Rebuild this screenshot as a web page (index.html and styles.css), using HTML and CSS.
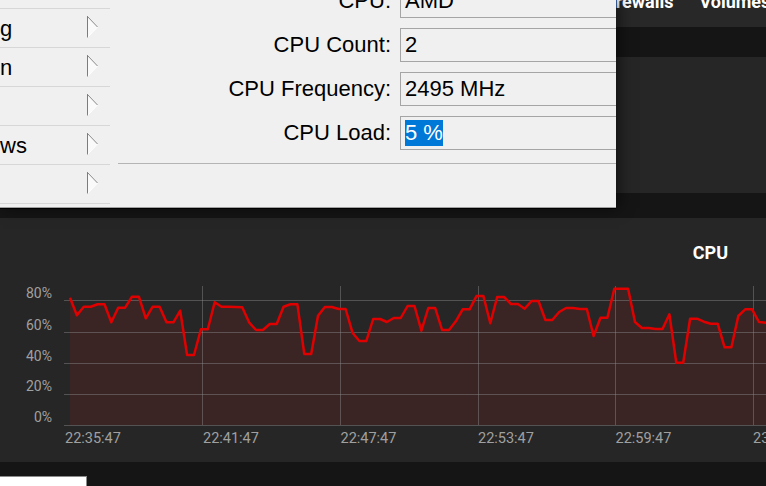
FILE: index.html
```html
<!DOCTYPE html>
<html lang="en">
<head>
<meta charset="utf-8">
<title>CPU</title>
<link rel="stylesheet" href="styles.css">
</head>
<body>
<div class="page">
  <nav class="topnav">
    <span class="nav-item">Firewalls</span>
    <span class="nav-item">Volumes</span>
  </nav>
  <section class="panel panel-top"></section>
  <section class="panel chart">
    <h2 class="chart-title">CPU</h2>
    <svg class="chart-svg" width="766" height="198" viewBox="0 264 766 198" xmlns="http://www.w3.org/2000/svg">
      <polygon class="area" points="70,297.7 76.9,315.3 83.8,306.7 90.7,306.7 97.6,304.3 104.5,304.3 111.3,322.3 118.2,307.7 125.1,307.7 132,296.7 138.9,296.7 145.8,318.3 152.7,306.7 159.6,306.7 166.5,322.3 173.4,322.3 180.2,310.7 187.1,355 194,355 200.9,329.3 207.8,329.3 214.7,302.3 221.6,306.7 228.5,306.7 235.4,307 242.2,307.3 249.1,322.3 256,330 262.9,330 269.8,324 276.7,324 283.6,306.7 290.5,304.3 297.4,304.3 304.3,354 311.2,354 318,315.7 324.9,307 331.8,307 338.7,309 345.6,309 352.5,332.7 359.4,341 366.3,341 373.2,319 380.1,319 386.9,322 393.8,318 400.7,318 407.6,306 414.5,306 421.4,330.7 428.3,308 435.2,308 442.1,330 449,330 455.8,321.3 462.7,309.3 469.6,309.3 476.5,296 483.4,296 490.3,323.3 497.2,297 504.1,297 511,304 517.9,304 524.7,308.7 531.6,301 538.5,301 545.4,320 552.3,320 559.2,312 566.1,308 573,308 579.9,309 586.8,309 593.6,336 600.5,317.7 607.4,317.7 614.3,288.7 621.2,288.7 628.1,288.7 635,322 641.9,328 648.8,328 655.7,329 662.5,329 669.4,314.3 676.3,362.7 683.2,362.7 690.1,318.7 697,318.7 703.9,321.7 710.8,323.7 717.7,323.7 724.6,347.3 731.4,347.3 738.3,316 745.2,309.3 752.1,309.3 759,322 765.9,322.7 772.8,323 772.8,425 70,425"/>
      <g class="grid">
        <line x1="64" y1="300.5" x2="766" y2="300.5"/>
        <line x1="64" y1="332.5" x2="766" y2="332.5"/>
        <line x1="64" y1="363.5" x2="766" y2="363.5"/>
        <line x1="64" y1="394.5" x2="766" y2="394.5"/>
        <line x1="64" y1="425.5" x2="766" y2="425.5"/>
        <line x1="202.5" y1="286" x2="202.5" y2="425"/>
        <line x1="340.5" y1="286" x2="340.5" y2="425"/>
        <line x1="478.5" y1="286" x2="478.5" y2="425"/>
        <line x1="615.5" y1="286" x2="615.5" y2="425"/>
        <line x1="753.5" y1="286" x2="753.5" y2="425"/>
      </g>
      <polyline class="line" points="70,297.7 76.9,315.3 83.8,306.7 90.7,306.7 97.6,304.3 104.5,304.3 111.3,322.3 118.2,307.7 125.1,307.7 132,296.7 138.9,296.7 145.8,318.3 152.7,306.7 159.6,306.7 166.5,322.3 173.4,322.3 180.2,310.7 187.1,355 194,355 200.9,329.3 207.8,329.3 214.7,302.3 221.6,306.7 228.5,306.7 235.4,307 242.2,307.3 249.1,322.3 256,330 262.9,330 269.8,324 276.7,324 283.6,306.7 290.5,304.3 297.4,304.3 304.3,354 311.2,354 318,315.7 324.9,307 331.8,307 338.7,309 345.6,309 352.5,332.7 359.4,341 366.3,341 373.2,319 380.1,319 386.9,322 393.8,318 400.7,318 407.6,306 414.5,306 421.4,330.7 428.3,308 435.2,308 442.1,330 449,330 455.8,321.3 462.7,309.3 469.6,309.3 476.5,296 483.4,296 490.3,323.3 497.2,297 504.1,297 511,304 517.9,304 524.7,308.7 531.6,301 538.5,301 545.4,320 552.3,320 559.2,312 566.1,308 573,308 579.9,309 586.8,309 593.6,336 600.5,317.7 607.4,317.7 614.3,288.7 621.2,288.7 628.1,288.7 635,322 641.9,328 648.8,328 655.7,329 662.5,329 669.4,314.3 676.3,362.7 683.2,362.7 690.1,318.7 697,318.7 703.9,321.7 710.8,323.7 717.7,323.7 724.6,347.3 731.4,347.3 738.3,316 745.2,309.3 752.1,309.3 759,322 765.9,322.7 772.8,323"/>
      <g class="ylabels">
        <text x="52" y="298">80%</text>
        <text x="52" y="329.6">60%</text>
        <text x="52" y="360.7">40%</text>
        <text x="52" y="391.3">20%</text>
        <text x="52" y="422.3">0%</text>
      </g>
      <g class="xlabels">
        <text x="65" y="443">22:35:47</text>
        <text x="203" y="443">22:41:47</text>
        <text x="340.5" y="443">22:47:47</text>
        <text x="478" y="443">22:53:47</text>
        <text x="615.5" y="443">22:59:47</text>
        <text x="753" y="443">23:05:47</text>
      </g>
    </svg>
  </section>
  <div class="footer-input"></div>
</div>

<div class="dialog">
  <ul class="menu">
    <li><span>g</span><svg class="arrow" width="11" height="22" viewBox="0 0 11 22"><polygon points="0.5,0.5 10.5,11 0.5,21.5" fill="#fafafa"/><line x1="0.5" y1="0" x2="0.5" y2="22" stroke="#7c7c7c"/><line x1="0.5" y1="0.5" x2="10.5" y2="11" stroke="#8a8a8a"/><line x1="0.5" y1="21.5" x2="10.5" y2="11" stroke="#ffffff"/></svg></li>
    <li><span>n</span><svg class="arrow" width="11" height="22" viewBox="0 0 11 22"><polygon points="0.5,0.5 10.5,11 0.5,21.5" fill="#fafafa"/><line x1="0.5" y1="0" x2="0.5" y2="22" stroke="#7c7c7c"/><line x1="0.5" y1="0.5" x2="10.5" y2="11" stroke="#8a8a8a"/><line x1="0.5" y1="21.5" x2="10.5" y2="11" stroke="#ffffff"/></svg></li>
    <li><span></span><svg class="arrow" width="11" height="22" viewBox="0 0 11 22"><polygon points="0.5,0.5 10.5,11 0.5,21.5" fill="#fafafa"/><line x1="0.5" y1="0" x2="0.5" y2="22" stroke="#7c7c7c"/><line x1="0.5" y1="0.5" x2="10.5" y2="11" stroke="#8a8a8a"/><line x1="0.5" y1="21.5" x2="10.5" y2="11" stroke="#ffffff"/></svg></li>
    <li><span>ws</span><svg class="arrow" width="11" height="22" viewBox="0 0 11 22"><polygon points="0.5,0.5 10.5,11 0.5,21.5" fill="#fafafa"/><line x1="0.5" y1="0" x2="0.5" y2="22" stroke="#7c7c7c"/><line x1="0.5" y1="0.5" x2="10.5" y2="11" stroke="#8a8a8a"/><line x1="0.5" y1="21.5" x2="10.5" y2="11" stroke="#ffffff"/></svg></li>
    <li><span></span><svg class="arrow" width="11" height="22" viewBox="0 0 11 22"><polygon points="0.5,0.5 10.5,11 0.5,21.5" fill="#fafafa"/><line x1="0.5" y1="0" x2="0.5" y2="22" stroke="#7c7c7c"/><line x1="0.5" y1="0.5" x2="10.5" y2="11" stroke="#8a8a8a"/><line x1="0.5" y1="21.5" x2="10.5" y2="11" stroke="#ffffff"/></svg></li>
  </ul>
  <div class="props">
    <div class="form">
      <div class="label">CPU:</div><div class="field">AMD</div>
      <div class="label">CPU Count:</div><div class="field">2</div>
      <div class="label">CPU Frequency:</div><div class="field">2495 MHz</div>
      <div class="label">CPU Load:</div><div class="field"><span class="sel">5 %</span></div>
    </div>
    <hr class="sep">
  </div>
</div>
</body>
</html>
```
FILE: styles.css
```css
html, body {
  margin: 0;
  padding: 0;
}
body {
  background: #151515;
  font-family: Roboto, "Liberation Sans", sans-serif;
  width: 766px;
  height: 486px;
  overflow: hidden;
  position: relative;
}
.page {
  margin-top: -25px;
}
.topnav {
  height: 52px;
  background: #282828;
  display: flex;
  align-items: center;
  gap: 26px;
  padding-left: 601px;
  color: #ffffff;
  font-size: 18px;
  font-weight: 700;
  white-space: nowrap;
  overflow: hidden;
}
.panel {
  background: #262626;
}
.panel-top {
  margin-top: 30px;
  height: 136px;
}
.chart {
  margin-top: 25px;
  height: 244px;
  overflow: hidden;
}
.chart-title {
  margin: 0;
  padding: 24px 38px 0 0;
  text-align: right;
  font-size: 18px;
  line-height: 22px;
  font-weight: 700;
  color: #ffffff;
}
.chart-svg {
  display: block;
}
.area {
  fill: #3a2424;
}
.grid line {
  stroke: rgba(140, 140, 140, 0.45);
  stroke-width: 1;
}
.line {
  fill: none;
  stroke: #e00000;
  stroke-width: 2.5;
  stroke-linejoin: round;
}
.ylabels text {
  font-family: Roboto, sans-serif;
  font-size: 14px;
  fill: #a0a0a0;
  text-anchor: end;
}
.xlabels text {
  font-family: Roboto, sans-serif;
  font-size: 14.5px;
  fill: #a0a0a0;
}
.footer-input {
  margin-top: 14px;
  width: 86px;
  height: 20px;
  background: #ffffff;
  border-top: 1px solid #8a8a8a;
  border-right: 1px solid #8a8a8a;
}

/* dialog overlay */
.dialog {
  position: absolute;
  top: 0;
  left: 0;
  width: 616px;
  height: 207px;
  background: #f0f0f0;
  border-bottom: 1px solid #a0a0a0;
  box-shadow: 0 1px 0 #000000, 3px 0 14px rgba(0, 0, 0, 0.55);
  display: flex;
  overflow: hidden;
  font-family: "Liberation Sans", Arial, sans-serif;
  font-size: 22px;
  color: #000000;
}
.menu {
  flex: none;
  width: 110px;
  margin: 0 1px 0 0;
  padding: 8px 0 0;
  list-style: none;
}
.menu li {
  height: 36px;
  padding-top: 2px;
  border-top: 1px solid #d7d7d7;
  display: flex;
  justify-content: space-between;
  align-items: flex-start;
  line-height: 36px;
}
.menu li:last-child {
  border-bottom: 1px solid #d7d7d7;
}
.arrow {
  display: block;
  margin: 5px 12px 0 0;
}
.props {
  flex: 1;
  min-width: 0;
}
.form {
  display: grid;
  grid-template-columns: 280px 240px;
  column-gap: 9px;
  row-gap: 10px;
  margin-top: -16px;
}
.label {
  text-align: right;
  line-height: 34px;
  white-space: nowrap;
}
.field {
  height: 32px;
  border: 1px solid #a5a5a5;
  padding-left: 4px;
  display: flex;
  align-items: center;
  white-space: nowrap;
}
.sel {
  background: #0078d7;
  color: #ffffff;
  line-height: 26px;
}
.sep {
  margin: 13px 0 0 7px;
  border: 0;
  border-top: 1px solid #b4b4b4;
  height: 0;
}
```
